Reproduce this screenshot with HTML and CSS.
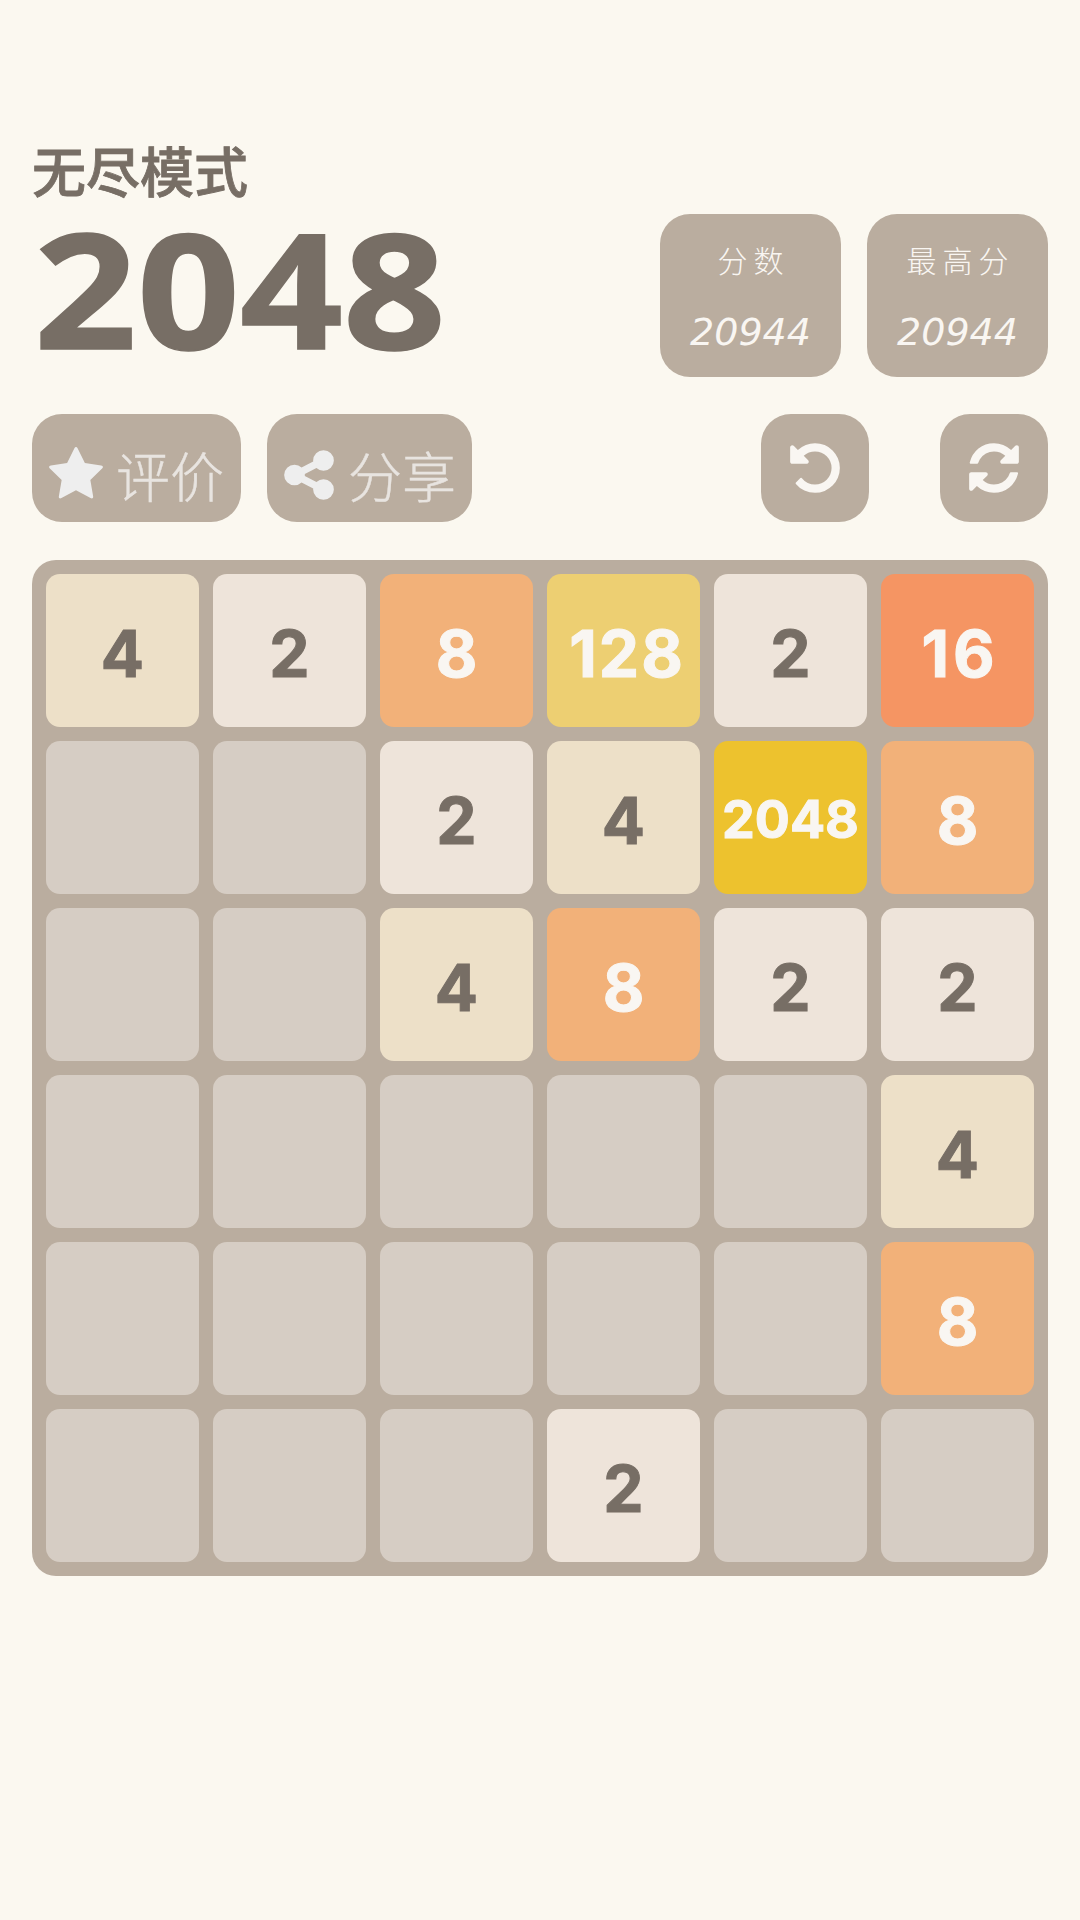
FILE: index.html
```html
<!DOCTYPE html>
<html lang="zh">
<head>
<meta charset="utf-8">
<title>2048</title>
<link rel="stylesheet" href="styles.css">
</head>
<body>
<main class="page">
  <header class="header">
    <div class="titles">
      <div class="mode">无尽模式</div>
      <h1 class="logo">2048</h1>
    </div>
    <div class="scores">
      <div class="score"><div class="score-label">分数</div><div class="score-value">20944</div></div>
      <div class="score"><div class="score-label">最高分</div><div class="score-value">20944</div></div>
    </div>
  </header>
  <nav class="actions">
    <div class="btn btn-rate">
      <svg class="icon icon-soft" viewBox="0 0 1792 1792"><path d="M1728 647q0 22-26 48l-363 354 86 500q1 7 1 20 0 21-10.5 35.5t-30.5 14.5q-19 0-40-12l-449-236-449 236q-22 12-40 12-21 0-31.5-14.5t-10.5-35.5q0-6 2-20l86-500-364-354q-25-27-25-48 0-37 56-46l502-73 225-455q19-41 49-41t49 41l225 455 502 73q56 9 56 46z"/></svg>
      <span class="btn-text">评价</span>
    </div>
    <div class="btn btn-share">
      <svg class="icon icon-soft" viewBox="0 0 1792 1792"><path d="M1344 1024q133 0 226.5 93.5t93.5 226.5-93.5 226.5-226.5 93.5-226.5-93.5-93.5-226.5q0-12 2-34l-360-180q-92 86-218 86-133 0-226.5-93.5t-93.5-226.5 93.5-226.5 226.5-93.5q126 0 218 86l360-180q-2-22-2-34 0-133 93.5-226.5t226.5-93.5 226.5 93.5 93.5 226.5-93.5 226.5-226.5 93.5q-126 0-218-86l-360 180q2 22 2 34t-2 34l360 180q92-86 218-86z"/></svg>
      <span class="btn-text">分享</span>
    </div>
    <div class="btn btn-square btn-undo">
      <svg class="icon" viewBox="0 0 1792 1792"><path d="M1664 896q0 156-61 298t-164 245-245 164-298 61q-172 0-327-72.5t-264-204.5q-7-10-6.5-22.5t8.5-20.5l137-138q10-9 25-9 16 2 23 12 73 95 179 147t225 52q104 0 198.5-40.5t163.5-109.5 109.5-163.5 40.5-198.5-40.5-198.5-109.5-163.5-163.5-109.5-198.5-40.5q-98 0-188 35.5t-160 101.5l137 138q31 30 14 69-17 40-59 40h-448q-26 0-45-19t-19-45v-448q0-42 40-59 39-17 69 14l130 129q107-101 244.5-156.5t284.5-55.5q156 0 298 61t245 164 164 245 61 298z"/></svg>
    </div>
    <div class="btn btn-square btn-refresh">
      <svg class="icon" viewBox="0 0 1792 1792"><path d="M1639 1056q0 5-1 7-64 268-268 434.5t-478 166.5q-146 0-282.5-55t-243.5-157l-129 129q-19 19-45 19t-45-19-19-45v-448q0-26 19-45t45-19h448q26 0 45 19t19 45-19 45l-137 137q71 66 161 102t187 36q134 0 250-65t186-179q11-17 53-117 8-23 30-23h192q13 0 22.5 9.5t9.5 22.5zm25-800v448q0 26-19 45t-45 19h-448q-26 0-45-19t-19-45 19-45l138-138q-148-137-349-137-134 0-250 65t-186 179q-11 17-53 117-8 23-30 23h-199q-13 0-22.5-9.5t-9.5-22.5v-7q65-268 270-434.5t480-166.5q146 0 284 55.5t245 156.5l130-129q19-19 45-19t45 19 19 45z"/></svg>
    </div>
  </nav>
  <section class="board">
    <div class="cell t4">4</div><div class="cell t2">2</div><div class="cell t8">8</div><div class="cell t128">128</div><div class="cell t2">2</div><div class="cell t16">16</div>
    <div class="cell"></div><div class="cell"></div><div class="cell t2">2</div><div class="cell t4">4</div><div class="cell t2048">2048</div><div class="cell t8">8</div>
    <div class="cell"></div><div class="cell"></div><div class="cell t4">4</div><div class="cell t8">8</div><div class="cell t2">2</div><div class="cell t2">2</div>
    <div class="cell"></div><div class="cell"></div><div class="cell"></div><div class="cell"></div><div class="cell"></div><div class="cell t4">4</div>
    <div class="cell"></div><div class="cell"></div><div class="cell"></div><div class="cell"></div><div class="cell"></div><div class="cell t8">8</div>
    <div class="cell"></div><div class="cell"></div><div class="cell"></div><div class="cell t2">2</div><div class="cell"></div><div class="cell"></div>
  </section>
</main>
</body>
</html>
```
FILE: styles.css
```css
* { box-sizing: border-box; }
html, body { margin: 0; padding: 0; }
body {
  width: 1080px;
  height: 1920px;
  overflow: hidden;
  background: #fbf8f0;
  color: #776e65;
  font-family: "Noto Sans", "Noto Sans CJK SC", sans-serif;
}
.page { padding: 136px 32px 0; }
.header { display: flex; justify-content: space-between; align-items: flex-end; height: 241px; }
.titles { display: flex; flex-direction: column; }
.mode {
  font-family: "Noto Sans CJK SC", sans-serif;
  font-size: 54px;
  font-weight: 500;
  line-height: 68px;
  height: 68px;
  -webkit-text-stroke: 0.8px #776e65;
}
.logo {
  margin: 0 0 0 2px;
  font-family: "Noto Sans", sans-serif;
  font-size: 160px;
  font-weight: 700;
  line-height: 173px;
  -webkit-text-stroke: 1.5px #776e65;
  transform: translateY(-3px) scaleX(1.125);
  transform-origin: left center;
}
.scores { display: flex; gap: 26px; }
.score {
  width: 181px;
  height: 163px;
  border-radius: 30px;
  background: #baad9f;
  color: #f9f6f2;
  display: flex;
  flex-direction: column;
  align-items: center;
  padding-top: 25px;
}
.score-label {
  font-family: "Noto Sans CJK SC", sans-serif;
  font-size: 30px;
  font-weight: 300;
  line-height: 40px;
  letter-spacing: 6px;
  padding-left: 6px;
}
.score-value {
  font-family: "DejaVu Sans", sans-serif;
  font-style: italic;
  font-weight: 300;
  font-size: 38px;
  line-height: 46px;
  margin-top: 30px;
}
.actions { display: flex; align-items: center; margin-top: 37px; height: 108px; }
.btn {
  height: 108px;
  border-radius: 30px;
  background: #baad9f;
  display: flex;
  align-items: center;
  color: #f9f6f2;
}
.btn-rate { width: 209px; padding: 13px 0 0 15px; gap: 11px; }
.btn-share { width: 205px; margin-left: 26px; padding: 13px 0 0 13px; gap: 10px; }
.btn-square { width: 108px; justify-content: center; }
.btn-undo { margin-left: auto; }
.btn-refresh { margin-left: 71px; }
.icon { width: 58px; height: 58px; fill: #f9f6f2; flex: none; }
.icon-soft { fill: #eeeeee; }
.btn-text {
  font-family: "Noto Sans CJK SC", sans-serif;
  font-size: 54px;
  font-weight: 300;
  line-height: 60px;
  color: #e8e4e0;
  -webkit-text-stroke: 0.4px #e8e4e0;
}
.board {
  margin-top: 38px;
  width: 1016px;
  height: 1016px;
  padding: 14px;
  border-radius: 24px;
  background: #baad9f;
  display: grid;
  grid-template-columns: repeat(6, 153px);
  grid-template-rows: repeat(6, 153px);
  gap: 14px;
}
.cell {
  border-radius: 14px;
  background: #d6cdc4;
  display: flex;
  align-items: center;
  justify-content: center;
  font-family: "Inter", "Noto Sans", sans-serif;
  font-weight: 700;
  font-size: 64px;
  line-height: 1;
  padding-top: 6px;
  -webkit-text-stroke-width: 1px;
}
.t2 { background: #eee4da; }
.t4 { background: #ede0c8; }
.t8 { background: #f2b179; color: #f9f6f2; }
.t16 { background: #f59563; color: #f9f6f2; letter-spacing: 4px; padding-left: 5px; }
.t128 { background: #edcf72; color: #f9f6f2; letter-spacing: 2px; padding-left: 7px; }
.t2048 { background: #edc22e; color: #f9f6f2; font-size: 52px; padding-top: 5px; }
```
